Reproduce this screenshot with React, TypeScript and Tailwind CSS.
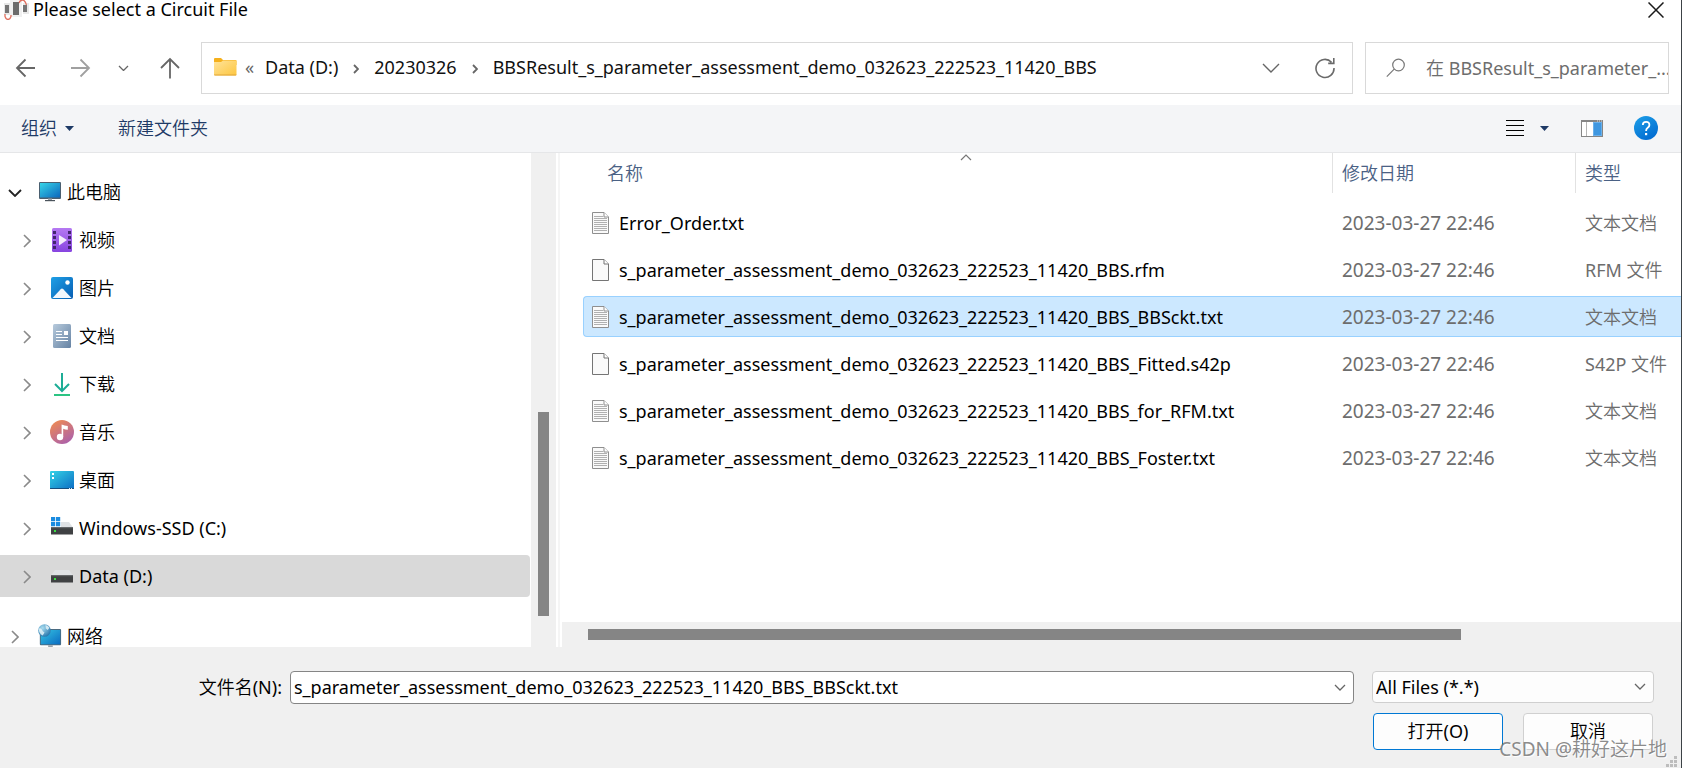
import React from "react";

const files = [
  { name: "Error_Order.txt", type: "文本文档", text: true },
  { name: "s_parameter_assessment_demo_032623_222523_11420_BBS.rfm", type: "RFM 文件", text: false },
  { name: "s_parameter_assessment_demo_032623_222523_11420_BBS_BBSckt.txt", type: "文本文档", text: true, selected: true },
  { name: "s_parameter_assessment_demo_032623_222523_11420_BBS_Fitted.s42p", type: "S42P 文件", text: false },
  { name: "s_parameter_assessment_demo_032623_222523_11420_BBS_for_RFM.txt", type: "文本文档", text: true },
  { name: "s_parameter_assessment_demo_032623_222523_11420_BBS_Foster.txt", type: "文本文档", text: true },
];

function AppIcon() {
  return (
    <svg width="26" height="20" viewBox="0 0 26 20" className="block shrink-0" aria-hidden="true">
      <rect x="0" y="3" width="6" height="12" fill="#e8e8e8" />
      <rect x="6" y="0" width="12" height="17" fill="#f0f0f0" />
      <rect x="19" y="3" width="6" height="11" fill="#e8e8e8" />
      <path d="M1 14v2.500q1 3 3 3t3-3v-1.500" fill="none" stroke="#e0705f" strokeWidth="1.300" />
      <path d="M15 3q1-3 3.500-3t4 5" fill="none" stroke="#e0705f" strokeWidth="1.300" />
      <rect x="1" y="5" width="4" height="8" fill="#757575" />
      <rect x="9" y="2" width="6" height="13" fill="#6b6b6b" />
      <rect x="19" y="5" width="4" height="7" fill="#757575" />
    </svg>
  );
}

function Chevron({ dir, size, stroke, width }: { dir: "down" | "right" | "up"; size: number; stroke: string; width: number }) {
  const h = size / 2;
  const p =
    dir === "down" ? `M1 1L${h} ${h}L${size - 1} 1` : dir === "up" ? `M1 ${h}L${h} 1L${size - 1} ${h}` : `M1 1L${h} ${h}L1 ${size - 1}`;
  return (
    <svg
      width={dir === "right" ? h + 1 : size}
      height={dir === "right" ? size : h + 1}
      viewBox={dir === "right" ? `0 0 ${h + 1} ${size}` : `0 0 ${size} ${h + 1}`}
      className="block shrink-0"
      aria-hidden="true"
    >
      <path d={p} fill="none" stroke={stroke} strokeWidth={width} />
    </svg>
  );
}

function Arrow({ path, color }: { path: string; color: string }) {
  return (
    <svg width="22" height="22" viewBox="0 0 22 22" className="block" aria-hidden="true">
      <path d={path} fill="none" stroke={color} strokeWidth="1.800" />
    </svg>
  );
}

function FolderIcon() {
  return (
    <svg width="23" height="18" viewBox="0 0 23 18" className="block shrink-0" aria-hidden="true">
      <defs>
        <linearGradient id="folder" x1="0" y1="0" x2="1" y2="1">
          <stop offset="0" stopColor="#ffe39a" />
          <stop offset="1" stopColor="#fdc63f" />
        </linearGradient>
      </defs>
      <path d="M0 1q0-1 1-1h6l2 2h12.500q1 0 1 1v4H0z" fill="#f5b01c" />
      <path d="M0 4h7l2-1.500h13.500v14q0 1-1 1H1q-1 0-1-1z" fill="url(#folder)" />
      <path d="M0 16.500h22.500q0 1-1 1H1q-1 0-1-1z" fill="#e0a63a" />
    </svg>
  );
}

function RefreshIcon() {
  return (
    <svg width="22" height="22" viewBox="0 0 22 22" className="block" aria-hidden="true">
      <path d="M17.500 5.200A9 9 0 1 0 20 11M19.800 1v5.400h-5.600" fill="none" stroke="#6a6a6a" strokeWidth="1.600" />
    </svg>
  );
}

function SearchIcon() {
  return (
    <svg width="20" height="20" viewBox="0 0 20 20" className="block shrink-0" aria-hidden="true">
      <circle cx="12.500" cy="7" r="5.800" fill="none" stroke="#777" strokeWidth="1.200" />
      <path d="M8.200 11.200L0.800 18.600" stroke="#777" strokeWidth="1.200" />
    </svg>
  );
}

function Triangle() {
  return (
    <svg width="9" height="5" viewBox="0 0 9 5" className="block shrink-0" aria-hidden="true">
      <path d="M0 0h9L4.500 5z" fill="#1e3a66" />
    </svg>
  );
}

function FileIcon({ text }: { text: boolean }) {
  return (
    <svg width="17" height="22" viewBox="0 0 17 22" className="block shrink-0" aria-hidden="true">
      <path d="M0.500 0.500h11.500l4.500 4.500v16.500h-16z" fill="#fafafa" stroke={text ? "#8f8f8f" : "#757575"} />
      <path d="M12 0.500V5h4.500" fill="#fff" stroke={text ? "#8f8f8f" : "#757575"} />
      {text && <path d="M2 4.500h9M2 6.500h13M2 8.500h13M2 10.500h13M2 12.500h13M2 14.500h13M2 16.500h13M2 18.500h13" stroke="#b0b0b0" />}
    </svg>
  );
}

function PcIcon() {
  return (
    <svg width="24" height="24" viewBox="0 0 24 24" className="block" aria-hidden="true">
      <defs>
        <linearGradient id="screen" x1="0" y1="0" x2="1" y2="1">
          <stop offset="0" stopColor="#36d5e8" />
          <stop offset="1" stopColor="#0b66bd" />
        </linearGradient>
      </defs>
      <rect x="1" y="2" width="22" height="17" rx="1" fill="#4a5f70" />
      <rect x="2" y="3" width="20" height="14.500" fill="url(#screen)" />
      <rect x="10" y="18.500" width="4" height="2" fill="#9aa3aa" />
      <rect x="7" y="20" width="10" height="1.200" fill="#4b545c" />
    </svg>
  );
}

function VideoIcon() {
  return (
    <svg width="24" height="24" viewBox="0 0 24 24" className="block" aria-hidden="true">
      <defs>
        <linearGradient id="video" x1="0" y1="0" x2="0" y2="1">
          <stop offset="0" stopColor="#b579f2" />
          <stop offset="1" stopColor="#8744e0" />
        </linearGradient>
      </defs>
      <rect x="2" y="0" width="20" height="24" rx="1.500" fill="url(#video)" />
      {[3, 8, 13, 18].map((y) => (
        <g key={y} fill="#43256f">
          <rect x="3" y={y} width="3" height="3" />
          <rect x="18" y={y} width="3" height="3" />
        </g>
      ))}
      <path d="M9 7l8 5-8 5.500z" fill="#f3ecfb" />
    </svg>
  );
}

function PictureIcon() {
  return (
    <svg width="24" height="24" viewBox="0 0 24 24" className="block" aria-hidden="true">
      <defs>
        <linearGradient id="picture" x1="0" y1="0" x2="1" y2="1">
          <stop offset="0" stopColor="#1fa0e6" />
          <stop offset="1" stopColor="#075eb3" />
        </linearGradient>
      </defs>
      <rect x="1" y="1" width="22" height="22" rx="2" fill="url(#picture)" />
      <circle cx="17.500" cy="6.500" r="2.200" fill="#fff" />
      <path d="M2.500 22l8.200-8.800q1.300-1.300 2.600 0L21.500 22z" fill="#f2f7fc" />
    </svg>
  );
}

function DocumentIcon() {
  return (
    <svg width="24" height="24" viewBox="0 0 24 24" className="block" aria-hidden="true">
      <defs>
        <linearGradient id="document" x1="0" y1="0" x2="1" y2="1">
          <stop offset="0" stopColor="#b7cadc" />
          <stop offset="1" stopColor="#6582a3" />
        </linearGradient>
      </defs>
      <rect x="3" y="0" width="18" height="24" rx="1.500" fill="url(#document)" />
      <path d="M6 7.500h6M6 10.500h6M6 13.500h12M6 16.500h12" stroke="#fff" strokeWidth="1.200" />
      <rect x="14" y="7" width="4" height="4" fill="#fff" />
    </svg>
  );
}

function DownloadIcon() {
  return (
    <svg width="24" height="24" viewBox="0 0 24 24" className="block" aria-hidden="true">
      <path d="M12 1v18M5 12l7 7 7-7" fill="none" stroke="#1dad96" strokeWidth="2" />
      <path d="M4 23h16" stroke="#2cc483" strokeWidth="2" />
    </svg>
  );
}

function MusicIcon() {
  return (
    <svg width="24" height="24" viewBox="0 0 24 24" className="block" aria-hidden="true">
      <defs>
        <linearGradient id="music" x1="0.200" y1="0" x2="0.800" y2="1">
          <stop offset="0" stopColor="#ee8a54" />
          <stop offset="1" stopColor="#a95fae" />
        </linearGradient>
      </defs>
      <circle cx="12" cy="12" r="12" fill="url(#music)" />
      <circle cx="10" cy="17" r="3.200" fill="#fff" />
      <path d="M11.600 17V4.500q3 1 6.200 1.500v3.800q-2.600 0-4.600-1V17z" fill="#fff" />
    </svg>
  );
}

function DesktopIcon() {
  return (
    <svg width="24" height="24" viewBox="0 0 24 24" className="block" aria-hidden="true">
      <defs>
        <linearGradient id="desktop" x1="0" y1="0" x2="1" y2="1">
          <stop offset="0" stopColor="#33d3e6" />
          <stop offset="1" stopColor="#0c6dc4" />
        </linearGradient>
      </defs>
      <rect x="0" y="3" width="24" height="18" rx="1" fill="url(#desktop)" />
      <path d="M0 20h24v0.500q0 0.500-1 0.500H1q-1 0-1-0.500z" fill="#174e7c" />
      <path d="M19 20.500h1M21 20.500h1" stroke="#d5e8f5" />
      <rect x="2" y="5" width="2" height="2" fill="#fff" />
      <rect x="2" y="9" width="2" height="2" fill="#fff" />
    </svg>
  );
}

function DriveIcon({ system = false }: { system?: boolean }) {
  return (
    <svg width="24" height="24" viewBox="0 0 24 24" className="block" aria-hidden="true">
      <path d="M5 6h14l4 5.500H1z" fill="#dfe2e5" />
      <rect x="1" y="11" width="22" height="7.500" fill="#3f4143" />
      <rect x="1" y="11" width="22" height="1.200" fill="#65686b" />
      <rect x="4" y="14" width="2" height="2" fill="#3be043" />
      {system && (
        <g>
          <rect x="0" y="0" width="11" height="11" fill="#fff" />
          <path d="M1 1h4.200v4.200H1zM6 1h4.200v4.200H6zM1 6h4.200v4.200H1zM6 6h4.200v4.200H6z" fill="#1a8be0" />
        </g>
      )}
    </svg>
  );
}

function NetworkIcon() {
  return (
    <svg width="26" height="26" viewBox="0 0 26 26" className="block" aria-hidden="true">
      <defs>
        <linearGradient id="net" x1="0" y1="0" x2="1" y2="1">
          <stop offset="0" stopColor="#35c4e2" />
          <stop offset="1" stopColor="#0b6cc2" />
        </linearGradient>
        <radialGradient id="globe" cx="0.350" cy="0.300" r="0.800">
          <stop offset="0" stopColor="#a9dcef" />
          <stop offset="1" stopColor="#1d6fa8" />
        </radialGradient>
      </defs>
      <rect x="2" y="5.500" width="23" height="17.500" rx="1" fill="#4a6a80" />
      <rect x="3" y="6.500" width="21" height="15.500" fill="url(#net)" />
      <rect x="11" y="23" width="5" height="2" fill="#9aa3aa" />
      <circle cx="7" cy="7" r="6.800" fill="url(#globe)" />
      <path d="M1 5q2.500-1 3.500 1.500t2.500 2q0 2-2 4Q0.500 10 1 5zM8 1q3 0.500 4.500 3l-2 2.500-2-1.500z" fill="#e4f3f8" opacity="0.850" />
    </svg>
  );
}

function TreeItem({ icon, label, root, open, selected }: { icon: React.ReactNode; label: string; root?: boolean; open?: boolean; selected?: boolean }) {
  return (
    <li className="flex h-12 shrink-0 items-center pr-px">
      <button
        type="button"
        className={`flex h-[42px] w-full items-center rounded-r-sm text-left ${root ? "pl-2" : "pl-5"} ${selected ? "bg-[#d9d9d9]" : ""}`}
      >
        <span className="flex w-[14px] justify-center pt-px">
          {open ? <Chevron dir="down" size={14} stroke="#222" width={1.8} /> : <Chevron dir="right" size={14} stroke="#8a8a8a" width={1.6} />}
        </span>
        <span className="ml-4 flex w-6 justify-center">{icon}</span>
        <span className="ml-[5px] whitespace-nowrap">{label}</span>
      </button>
    </li>
  );
}

function Crumb({ children, last }: { children: React.ReactNode; last?: boolean }) {
  return (
    <>
      <a href="#" className="whitespace-nowrap">{children}</a>
      {!last && (
        <span className="flex w-9 justify-center pt-1">
          <Chevron dir="right" size={10} stroke="#666" width={1.8} />
        </span>
      )}
    </>
  );
}

export default function App() {
  return (
    <div className="relative flex h-screen min-h-[640px] flex-col overflow-hidden border-r border-[#3c4246] bg-white font-['Noto_Sans','Noto_Sans_CJK_SC_DemiLight','Noto_Sans_CJK_SC_Light','Noto_Sans_CJK_SC',sans-serif] text-[18px] leading-6 text-black">
      <header className="flex h-5 shrink-0 items-center pl-1">
        <AppIcon />
        <h1 className="ml-[3px] flex-1 pb-0.5 leading-[18px] whitespace-nowrap">Please select a Circuit File</h1>
        <button type="button" aria-label="Close" className="mr-4 p-px">
          <svg width="16" height="16" viewBox="0 0 16 16" className="block" aria-hidden="true">
            <path d="M0.500 0.500l15 15M15.500 0.500l-15 15" stroke="#1a1a1a" strokeWidth="1.500" />
          </svg>
        </button>
      </header>

      <nav className="flex shrink-0 items-center pt-[22px] pr-3 pb-[11px]">
        <button type="button" aria-label="Back" className="ml-[15px]">
          <Arrow path="M20 11H2.500M10.500 2.500L2 11l8.500 8.500" color="#666" />
        </button>
        <button type="button" aria-label="Forward" className="ml-8">
          <Arrow path="M2 11h17.500M11.500 2.500L20 11l-8.500 8.500" color="#a0a0a0" />
        </button>
        <button type="button" aria-label="Recent locations" className="ml-[27px]">
          <Chevron dir="down" size={11} stroke="#666" width={1.3} />
        </button>
        <button type="button" aria-label="Up" className="ml-[30px]">
          <Arrow path="M11 21.500V2M2 11l9-9 9 9" color="#666" />
        </button>
        <div className="ml-5 flex h-[52px] min-w-0 flex-1 items-center border border-[#d9d9d9] pb-0.5 pl-3 text-[#111]">
          <FolderIcon />
          <span className="ml-2 w-5 text-[#666]">«</span>
          <Crumb>Data (D:)</Crumb>
          <Crumb>20230326</Crumb>
          <Crumb last>BBSResult_s_parameter_assessment_demo_032623_222523_11420_BBS</Crumb>
          <button type="button" aria-label="Previous locations" className="mr-[34px] ml-auto pt-0.5">
            <Chevron dir="down" size={18} stroke="#666" width={1.4} />
          </button>
          <button type="button" aria-label="Refresh" className="mr-4 pt-0.5">
            <RefreshIcon />
          </button>
        </div>
        <div className="ml-3 flex h-[52px] w-[304px] shrink-0 items-center border border-[#d9d9d9] pl-5">
          <SearchIcon />
          <input
            type="text"
            aria-label="Search"
            placeholder="在 BBSResult_s_parameter_..."
            className="ml-5 w-0 min-w-0 flex-1 bg-transparent outline-none placeholder:text-[#6d6d6d]"
          />
        </div>
      </nav>

      <div className="flex h-12 shrink-0 items-center border-b border-[#e5e6e8] bg-[#f4f5f7] pb-px text-[#1e3a66]">
        <button type="button" className="ml-[21px] flex items-center gap-2">
          组织
          <Triangle />
        </button>
        <button type="button" className="ml-11">新建文件夹</button>
        <button type="button" aria-label="Change view" className="ml-auto flex items-center gap-[15px]">
          <svg width="20" height="18" viewBox="0 0 20 18" className="block" aria-hidden="true">
            <path d="M1 1.500h18M1 6.500h18M1 11.500h18M1 16.500h18" stroke="#000" />
          </svg>
          <Triangle />
        </button>
        <button type="button" aria-label="Preview pane" className="ml-8">
          <svg width="22" height="17" viewBox="0 0 22 17" className="block" aria-hidden="true">
            <rect x="0.500" y="0.500" width="21" height="16" fill="#fff" stroke="#858585" />
            <path d="M0 1h22" stroke="#858585" strokeWidth="2" />
            <path d="M5.500 2v14" stroke="#b5b5b5" />
            <rect x="12" y="2" width="9" height="14" fill="#6bb0ea" />
            <rect x="13" y="3" width="7" height="12" fill="#3f97e0" />
            <path d="M16 1h1M18 1h1M20 1h1" stroke="#e2e2e2" />
          </svg>
        </button>
        <button type="button" aria-label="Help" className="mr-[23px] ml-[31px]">
          <svg width="24" height="24" viewBox="0 0 24 24" className="block" aria-hidden="true">
            <defs>
              <linearGradient id="help" x1="0.200" y1="0" x2="0.800" y2="1">
                <stop offset="0" stopColor="#1b9be6" />
                <stop offset="1" stopColor="#0069d0" />
              </linearGradient>
            </defs>
            <circle cx="12" cy="12" r="12" fill="url(#help)" />
            <path d="M8.800 9q0-3.200 3.300-3.200T15.400 9q0 1.600-1.700 2.800T12.100 15" fill="none" stroke="#fff" strokeWidth="1.800" />
            <rect x="11" y="17" width="2.200" height="2.200" fill="#fff" />
          </svg>
        </button>
      </div>

      <main className="flex min-h-0 flex-1">
        <aside className="flex w-[556px] shrink-0">
          <ul className="flex min-w-0 flex-1 flex-col overflow-hidden pt-[15px]">
            <TreeItem root open icon={<PcIcon />} label="此电脑" />
            <TreeItem icon={<VideoIcon />} label="视频" />
            <TreeItem icon={<PictureIcon />} label="图片" />
            <TreeItem icon={<DocumentIcon />} label="文档" />
            <TreeItem icon={<DownloadIcon />} label="下载" />
            <TreeItem icon={<MusicIcon />} label="音乐" />
            <TreeItem icon={<DesktopIcon />} label="桌面" />
            <TreeItem icon={<DriveIcon system />} label="Windows-SSD (C:)" />
            <TreeItem selected icon={<DriveIcon />} label="Data (D:)" />
            <li className="h-3 shrink-0" />
            <TreeItem root icon={<NetworkIcon />} label="网络" />
          </ul>
          <div className="flex w-[25px] flex-col items-center bg-[#f0f0f0] pb-[31px]">
            <div className="mt-auto h-[204px] w-[11px] bg-[#858585]" />
          </div>
        </aside>
        <div className="mr-0.5 ml-0.5 w-0.5 shrink-0 bg-[#f5f5f5]" />
        <section className="flex min-w-0 flex-1 flex-col">
          <div className="relative min-h-0 flex-1 overflow-hidden pl-[21px]">
            <table className="w-full table-fixed border-collapse text-left">
              <thead className="text-[#4a6184]">
                <tr>
                  <th className="h-[46px] p-0 align-top font-normal">
                    <div className="relative flex h-10 items-center pl-6">
                      名称
                      <span className="absolute inset-x-0 top-px flex justify-center pl-4">
                        <Chevron dir="up" size={12} stroke="#777" width={1.2} />
                      </span>
                    </div>
                  </th>
                  <th className="w-[243px] p-0 align-top font-normal">
                    <div className="flex h-10 items-center border-l border-[#e2e2e2] pl-[9px]">修改日期</div>
                  </th>
                  <th className="w-[106px] p-0 align-top font-normal">
                    <div className="flex h-10 items-center border-l border-[#e2e2e2] pl-[9px]">类型</div>
                  </th>
                </tr>
              </thead>
              <tbody>
                {files.map((f) => {
                  const tone = f.selected ? "border-[#99d1ff] bg-[#cce8ff]" : "border-transparent";
                  return (
                    <tr key={f.name} aria-selected={!!f.selected} className="h-[47px] whitespace-nowrap text-[#6d6d6d]">
                      <td className="p-0">
                        <div className={`flex h-[41px] items-center gap-[10px] rounded-l-sm border-y border-l pl-2 text-black ${tone}`}>
                          <FileIcon text={f.text} />
                          {f.name}
                        </div>
                      </td>
                      <td className="p-0">
                        <div className={`flex h-[41px] items-center border-y pl-[10px] text-[19px] ${tone}`}>2023-03-27 22:46</div>
                      </td>
                      <td className="p-0">
                        <div className={`flex h-[41px] items-center border-y pl-[10px] ${tone}`}>{f.type}</div>
                      </td>
                    </tr>
                  );
                })}
              </tbody>
            </table>
          </div>
          <div className="flex h-[25px] shrink-0 items-center bg-[#f0f0f0] pr-[220px] pl-[26px]">
            <div className="h-[11px] flex-1 bg-[#858585]" />
          </div>
        </section>
      </main>

      <footer className="flex shrink-0 gap-[18px] bg-[#f0f0f0] pt-6 pr-[27px] pb-[18px]">
        <div className="flex h-[33px] min-w-0 flex-1 items-center">
          <label htmlFor="filename" className="w-[290px] shrink-0 pr-2 pb-0.5 text-right">文件名(N):</label>
          <div className="flex h-[33px] min-w-0 flex-1 items-center rounded-sm border border-[#858585] bg-white">
            <input
              id="filename"
              defaultValue="s_parameter_assessment_demo_032623_222523_11420_BBS_BBSckt.txt"
              className="min-w-0 flex-1 bg-transparent pb-0.5 pl-[3px] outline-none"
            />
            <button type="button" aria-label="File name history" className="mr-[7px]">
              <Chevron dir="down" size={12} stroke="#666" width={1.3} />
            </button>
          </div>
        </div>
        <div className="flex w-[282px] shrink-0 flex-col gap-[10px]">
          <div className="relative">
            <select aria-label="File type" className="block h-8 w-full appearance-none rounded-sm border border-[#cfcfcf] bg-[#fdfdfd] pl-[3px]">
              <option>All Files (*.*)</option>
            </select>
            <span className="pointer-events-none absolute top-3 right-2">
              <Chevron dir="down" size={12} stroke="#666" width={1.3} />
            </span>
          </div>
          <div className="flex justify-between px-px">
            <button type="button" className="h-[37px] w-[130px] rounded border border-[#0078d4] bg-[#fdfdfd] pb-0.5">打开(O)</button>
            <button type="button" className="h-[37px] w-[130px] rounded border border-[#d0d0d0] bg-[#fdfdfd] pb-0.5">取消</button>
          </div>
        </div>
      </footer>

      <svg width="14" height="12" viewBox="0 0 14 12" className="absolute right-0.5 bottom-0" aria-hidden="true">
        <path d="M9 0h3v3H9zM5 4h3v3H5zM9 4h3v3H9zM1 8h3v3H1zM5 8h3v3H5zM9 8h3v3H9z" fill="#bdbdbd" />
      </svg>
      <p className="pointer-events-none absolute right-[14px] bottom-[7px] text-[19px] whitespace-nowrap text-[#6d6d6d]/80 [text-shadow:1px_1px_1px_#fff]">
        CSDN @耕好这片地
      </p>
    </div>
  );
}
